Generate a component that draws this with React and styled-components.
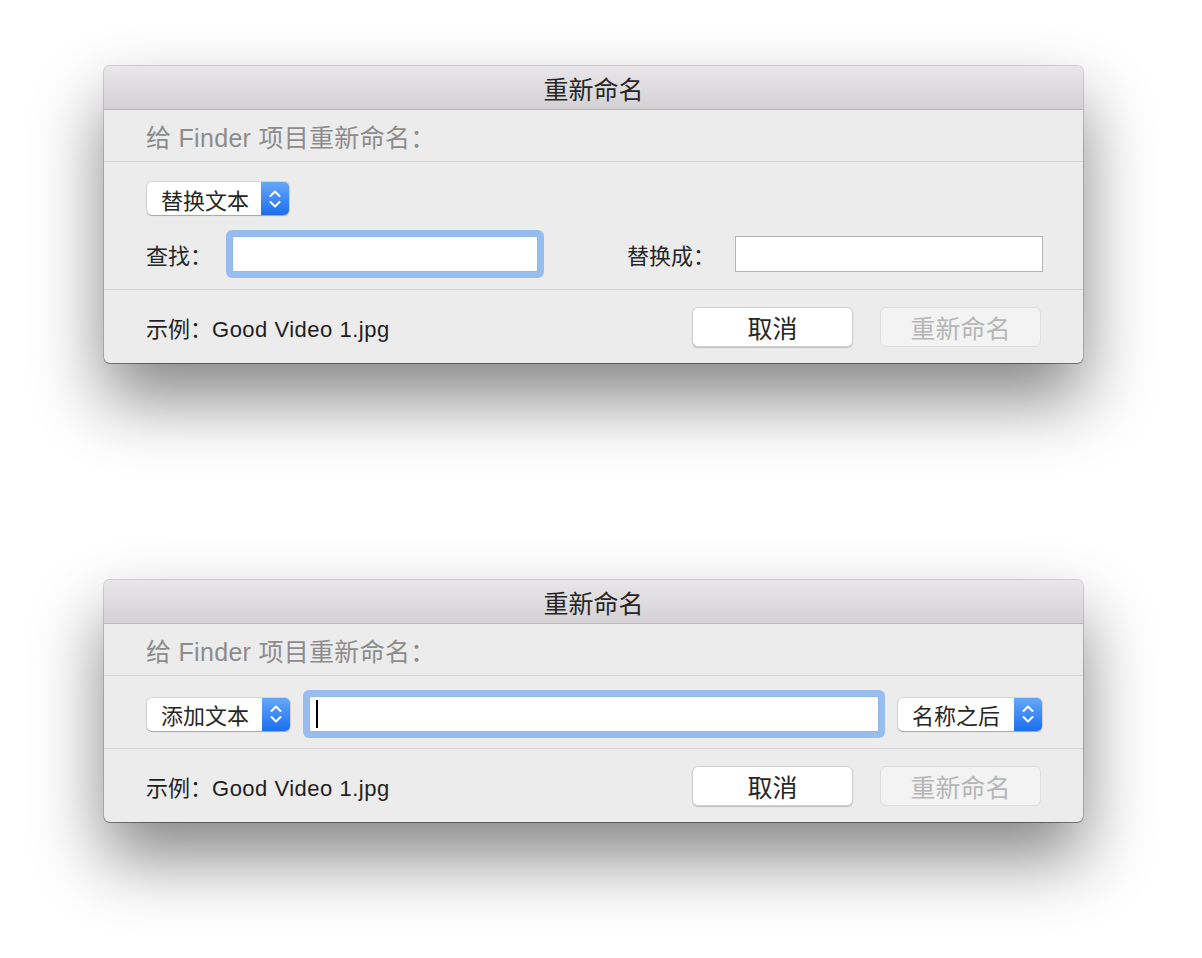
import styled, { createGlobalStyle } from 'styled-components'

const GlobalStyle = createGlobalStyle`
    html, body {
        margin: 0;
        padding: 0;
        background: #ffffff;
    }
    body {
        font-family: "Liberation Sans", "Noto Sans CJK SC", sans-serif;
        color: #262626;
    }
`

// 上下箭头 (弹出菜单)
const Chevrons = () => (
    <svg width="14" height="24" viewBox="0 0 14 24" fill="none">
        <path d="M2.5 9 L7 4.5 L11.5 9" stroke="#fff" strokeWidth="2" strokeLinecap="round" strokeLinejoin="round" />
        <path d="M2.5 15 L7 19.5 L11.5 15" stroke="#fff" strokeWidth="2" strokeLinecap="round" strokeLinejoin="round" />
    </svg>
)

const PopUp = ({ label, width }) => (
    <PopUpBox width={width}>
        <PopUpLabel>{label}</PopUpLabel>
        <PopUpArrow>
            <Chevrons />
        </PopUpArrow>
    </PopUpBox>
)

const Footer = () => (
    <FooterSection>
        <Example>示例：<FileName>Good Video 1.jpg</FileName></Example>
        <Buttons>
            <Button>取消</Button>
            <Button disabled>重新命名</Button>
        </Buttons>
    </FooterSection>
)

const Header = () => (
    <>
        <TitleBar>重新命名</TitleBar>
        <Subtitle>给 Finder 项目重新命名：</Subtitle>
    </>
)

const App = () => {
    return (
        <Page>
            <GlobalStyle />
            <Dialog>
                <Header />
                <Body>
                    <PopUp label='替换文本' width={142} />
                    <FieldRow>
                        <FieldLabel width={85}>查找：</FieldLabel>
                        <TextField width={306} focused />
                        <FieldLabel width={107} gap={90}>替换成：</FieldLabel>
                        <TextField width={308} />
                    </FieldRow>
                </Body>
                <Footer />
            </Dialog>
            <Dialog>
                <Header />
                <InlineBody>
                    <PopUp label='添加文本' width={143} />
                    <TextField focused grow>
                        <Caret />
                    </TextField>
                    <PopUp label='名称之后' width={144} />
                </InlineBody>
                <Footer />
            </Dialog>
        </Page>
    )
}

//스타일

const Page = styled.div`
    display: flex;
    flex-direction: column;
    gap: 217px;
    padding: 66px 0 120px 104px;
`

const Dialog = styled.div`
    width: 979px;
    background: #ececec;
    border-radius: 6px;
    overflow: hidden;
    box-shadow:
        0 0 0 1px rgba(0, 0, 0, 0.16),
        0 1px 0 rgba(0, 0, 0, 0.3),
        0 36px 70px rgba(0, 0, 0, 0.48);
`

const TitleBar = styled.div`
    height: 43px;
    display: flex;
    align-items: center;
    justify-content: center;
    font-size: 25px;
    color: #262626;
    background: linear-gradient(to bottom, #e9e7e9, #d3d1d4);
    border-bottom: 1px solid #b9b8ba;
`

const Subtitle = styled.div`
    height: 51px;
    display: flex;
    align-items: center;
    padding-left: 42px;
    font-size: 25px;
    letter-spacing: 0.3px;
    color: #8c8c8c;
    border-bottom: 1px solid #d5d5d5;
`

const Body = styled.div`
    display: flex;
    flex-direction: column;
    align-items: flex-start;
    gap: 21px;
    padding: 20px 41px 17px 43px;
    border-bottom: 1px solid #d5d5d5;
`

const InlineBody = styled.div`
    display: flex;
    align-items: center;
    gap: 19px;
    padding: 20px 41px 16px 43px;
    border-bottom: 1px solid #d5d5d5;
`

const FieldRow = styled.div`
    display: flex;
    align-items: center;
`

const FieldLabel = styled.div`
    width: ${p => p.width}px;
    margin-left: ${p => p.gap || 0}px;
    font-size: 22px;
    color: #262626;
    position: relative;
    left: -1px;
`

const TextField = styled.div`
    box-sizing: border-box;
    width: ${p => p.grow ? 'auto' : `${p.width}px`};
    flex: ${p => p.grow ? 1 : 'none'};
    height: 36px;
    display: flex;
    align-items: center;
    padding-left: 6px;
    background: #ffffff;
    border: 1px solid ${p => p.focused ? '#8fb6e6' : '#b5b5b5'};
    border-radius: ${p => p.focused ? '2px' : '0'};
    box-shadow: ${p => p.focused ? '0 0 0 6px #96bdee' : 'none'};
`

const Caret = styled.span`
    width: 2px;
    height: 28px;
    background: #000000;
`

const PopUpBox = styled.div`
    width: ${p => p.width}px;
    height: 33px;
    display: flex;
    border-radius: 5px;
    background: #ffffff;
    box-shadow:
        0 0 0 1px rgba(0, 0, 0, 0.1),
        0 1px 1px rgba(0, 0, 0, 0.22);
    overflow: hidden;
    flex: none;
`

const PopUpLabel = styled.div`
    flex: 1;
    display: flex;
    align-items: center;
    padding-left: 14px;
    font-size: 22px;
    color: #262626;
`

const PopUpArrow = styled.div`
    width: 28px;
    display: flex;
    align-items: center;
    justify-content: center;
    background: linear-gradient(to bottom, #65a8f8, #1c6ef0);
`

const FooterSection = styled.div`
    height: 73px;
    display: flex;
    align-items: center;
    justify-content: space-between;
    padding: 0 42px 0 42px;
`

const Example = styled.div`
    font-size: 22px;
    color: #1f1f1f;
`

const FileName = styled.span`
    letter-spacing: 0.5px;
`

const Buttons = styled.div`
    display: flex;
    gap: 27px;
`

const Button = styled.button`
    width: 161px;
    height: 40px;
    border-radius: 6px;
    font-family: "Liberation Sans", "Noto Sans CJK SC", sans-serif;
    font-size: 25px;
    padding: 0;
    color: ${p => p.disabled ? '#b6b6b6' : '#262626'};
    background: ${p => p.disabled ? '#f3f3f3' : '#ffffff'};
    border: 1px solid ${p => p.disabled ? '#dddddd' : '#cfcfcf'};
    box-shadow: ${p => p.disabled ? 'none' : '0 1px 1px rgba(0, 0, 0, 0.2)'};
`

export default App
